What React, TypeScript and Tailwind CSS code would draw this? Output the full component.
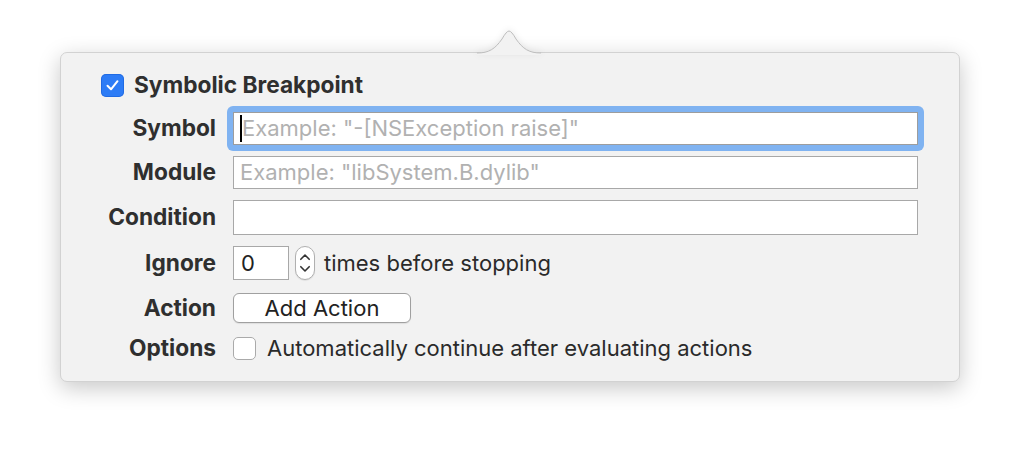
import React from "react";

const font = { fontFamily: "Inter, 'Liberation Sans', sans-serif" };

function Label({ children }: { children: React.ReactNode }) {
  return (
    <div className="text-right font-bold text-[22.7px] text-[#2f2f2f]">
      {children}
    </div>
  );
}

export default function App() {
  return (
    <div className="w-[1020px] h-[450px] bg-white pt-[52px] pl-[60px]" style={font}>
      <div className="relative w-[900px] h-[330px] rounded-[7px] bg-[#f2f2f2] border border-[#d2d2d2] shadow-[0_6px_22px_rgba(0,0,0,0.22)]">
        {/* popover arrow */}
        <svg
          className="absolute left-[416px] top-[-25px] drop-shadow-[0_-1px_3px_rgba(0,0,0,0.08)]"
          width="64"
          height="27"
          viewBox="0 0 64 27"
        >
          <path
            d="M0 25 C12 25 18 21 25 11 Q29.5 3 32 3 Q34.5 3 39 11 C46 21 52 25 64 25 L64 27 L0 27 Z"
            fill="#f2f2f2"
          />
          <path
            d="M0 25 C12 25 18 21 25 11 Q29.5 3 32 3 Q34.5 3 39 11 C46 21 52 25 64 25"
            fill="none"
            stroke="#bdbdbd"
            strokeWidth="1"
          />
        </svg>

        <div className="pt-[21px] pr-[41px]">
          {/* header */}
          <div className="flex items-center h-[23px] pl-[40px] gap-[10px]">
            <div className="w-[23px] h-[23px] rounded-[5px] bg-[#2d7cf6] flex items-center justify-center shadow-[inset_0_0_0_1px_rgba(20,90,210,0.5)]">
              <svg width="15" height="15" viewBox="0 0 15 15">
                <path d="M2.5 7.8 L6 11.3 L12.5 3.2" fill="none" stroke="white" strokeWidth="2" strokeLinecap="round" strokeLinejoin="round" />
              </svg>
            </div>
            <div className="font-bold text-[22.7px] text-[#2f2f2f]">Symbolic Breakpoint</div>
          </div>

          <div className="mt-[9px] grid grid-cols-[155px_1fr] gap-x-[17px]">
            {/* Symbol */}
            <div className="h-[44px] flex items-center justify-end"><Label>Symbol</Label></div>
            <div className="h-[44px] flex items-center">
              <div className="w-full rounded-[6px] bg-[#80b3f1] p-[6px] -mx-[6px] box-content">
                <div className="h-[33px] w-full bg-white border border-[#9d9d9d] flex items-center pl-[6px]">
                  <div className="w-[2px] h-[27px] bg-black" />
                  <span className="text-[22px] text-[#b1b1b1]">Example: "-[NSException raise]"</span>
                </div>
              </div>
            </div>

            {/* Module */}
            <div className="h-[44px] flex items-center justify-end"><Label>Module</Label></div>
            <div className="h-[44px] flex items-center">
              <div className="h-[33px] w-full bg-white border border-[#a8a8a8] flex items-center pl-[6px]">
                <span className="text-[22px] text-[#b1b1b1]">Example: "libSystem.B.dylib"</span>
              </div>
            </div>

            {/* Condition */}
            <div className="h-[46px] flex items-center justify-end"><Label>Condition</Label></div>
            <div className="h-[46px] flex items-center">
              <div className="h-[35px] w-full bg-white border border-[#a8a8a8]" />
            </div>

            {/* Ignore */}
            <div className="h-[46px] flex items-center justify-end"><Label>Ignore</Label></div>
            <div className="h-[46px] flex items-center">
              <div className="h-[34px] w-[56px] bg-white border border-[#a8a8a8] flex items-center pl-[7px] text-[22px] text-[#222222]">
                0
              </div>
              <div className="ml-[6px] h-[34px] w-[20px] rounded-[10px] bg-white border border-[#b0b0b0] flex flex-col items-center justify-center gap-[4px] shadow-[0_1px_1px_rgba(0,0,0,0.08)]">
                <svg width="12" height="8" viewBox="0 0 12 8">
                  <path d="M1.8 6.3 L6 2 L10.2 6.3" fill="none" stroke="#333" strokeWidth="1.6" strokeLinecap="round" strokeLinejoin="round" />
                </svg>
                <svg width="12" height="8" viewBox="0 0 12 8">
                  <path d="M1.8 1.7 L6 6 L10.2 1.7" fill="none" stroke="#333" strokeWidth="1.6" strokeLinecap="round" strokeLinejoin="round" />
                </svg>
              </div>
              <span className="ml-[9px] text-[22px] text-[#2a2a2a]">times before stopping</span>
            </div>

            {/* Action */}
            <div className="h-[44px] flex items-center justify-end"><Label>Action</Label></div>
            <div className="h-[44px] flex items-center">
              <div className="h-[30px] w-[178px] rounded-[6px] bg-white border border-[#a0a0a0] flex items-center justify-center text-[22px] text-[#222222] shadow-[0_1px_1px_rgba(0,0,0,0.08)]">
                Add Action
              </div>
            </div>

            {/* Options */}
            <div className="h-[36px] flex items-center justify-end"><Label>Options</Label></div>
            <div className="h-[36px] flex items-center">
              <div className="w-[23px] h-[23px] rounded-[5px] bg-white border border-[#aaaaaa]" />
              <span className="ml-[11px] text-[22px] text-[#2a2a2a]">Automatically continue after evaluating actions</span>
            </div>
          </div>
        </div>
      </div>
    </div>
  );
}
